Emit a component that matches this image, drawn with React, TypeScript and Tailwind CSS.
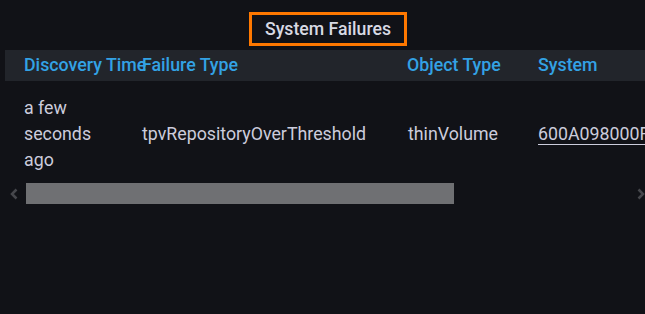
export default function App() {
  return (
    <div className="h-[314px] w-[645px] overflow-hidden bg-[#111217] font-['Roboto',sans-serif]">
      {/* Panel title */}
      <div className="flex h-[50px] justify-center pt-[12px] pl-[11px]">
        <div className="flex h-[34px] w-[158px] items-center justify-center border-[3px] border-[#ff7800] text-[17.7px] font-medium text-[#d8d9e3]">
          System Failures
        </div>
      </div>

      {/* Table */}
      <div className="ml-[5px] overflow-hidden">
        <div className="w-[700px]">
          <div className="grid h-[31px] grid-cols-[118px_265px_131px_1fr] items-center bg-[#22252b] text-[17.8px] font-medium text-[#33a2e5]">
            <div className="whitespace-nowrap pl-[19px]">Discovery Time</div>
            <div className="whitespace-nowrap pl-[19px]">Failure Type</div>
            <div className="whitespace-nowrap pl-[19px]">Object Type</div>
            <div className="whitespace-nowrap pl-[19px]">System</div>
          </div>
          <div className="grid grid-cols-[118px_265px_131px_1fr] items-center pt-[14px] text-[17.8px] leading-[26px] text-[#ccccdc]">
            <div className="w-[100px] pl-[19px]">a few seconds ago</div>
            <div className="whitespace-nowrap pl-[19px]">tpvRepositoryOverThreshold</div>
            <div className="whitespace-nowrap pl-[20px]">thinVolume</div>
            <div className="whitespace-nowrap pl-[19px]">
              <span className="border-b border-[#ccccdc]">600A098000F</span>
            </div>
          </div>
        </div>
      </div>

      {/* Horizontal scrollbar */}
      <div className="mt-[10px] flex h-[21px] items-center">
        <div className="flex w-[26px] justify-center pl-[2px]">
          <svg width="8" height="12" viewBox="0 0 8 12">
            <path d="M6.5 1.5 L2 6 L6.5 10.5" fill="none" stroke="#46474c" strokeWidth="2.5" />
          </svg>
        </div>
        <div className="h-[21px] w-[428px] bg-[#6f7073]" />
        <div className="flex flex-1 justify-end">
          <svg width="8" height="12" viewBox="0 0 8 12">
            <path d="M1.5 1.5 L6 6 L1.5 10.5" fill="none" stroke="#46474c" strokeWidth="2.5" />
          </svg>
        </div>
      </div>
    </div>
  );
}
